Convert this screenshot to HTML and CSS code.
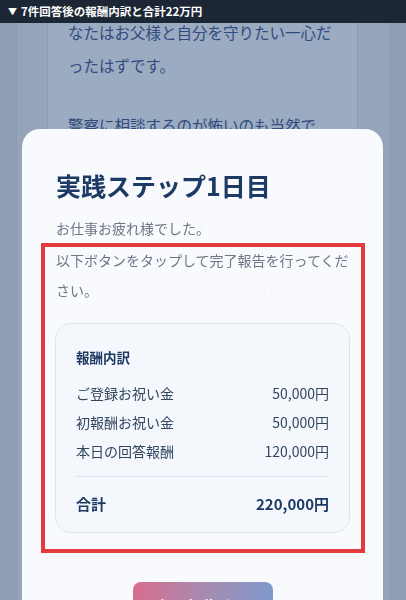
FILE: index.html
```html
<!DOCTYPE html>
<html lang="ja">
<head>
<meta charset="utf-8">
<title>実践ステップ1日目</title>
<link rel="stylesheet" href="styles.css">
</head>
<body>
<header class="topbar"><span class="tri">▼</span><span>7件回答後の報酬内訳と合計22万円</span></header>
<div class="page">
  <div class="col">
    <p class="para">なたはお父様と自分を守りたい一心だったはずです。</p>
    <p class="para">警察に相談するのが怖いのも当然です。そして、あなたがお父様との関係を大切に思う気持ちも、決して間違いではありません。まずはご自分を責めるのをやめて、心と体を休める時間をとってください。あなたの気持ちに寄り添い、これからの一歩を一緒に考えていきましょう。大切なのは、あなた自身が安心して過ごせる毎日を取り戻すことです。</p>
  </div>
</div>

<section class="modal">
  <h1 class="title">実践ステップ1日目</h1>
  <p class="greet">お仕事お疲れ様でした。</p>
  <div class="highlight">
    <p class="lead">以下ボタンをタップして完了報告を行ってください。</p>
    <div class="reward">
      <div class="reward-title">報酬内訳</div>
      <ul class="rows">
        <li class="row"><span>ご登録お祝い金</span><span>50,000円</span></li>
        <li class="row"><span>初報酬お祝い金</span><span>50,000円</span></li>
        <li class="row"><span>本日の回答報酬</span><span>120,000円</span></li>
      </ul>
      <div class="divider"></div>
      <div class="row total"><span>合計</span><span>220,000円</span></div>
    </div>
  </div>
  <button class="cta">完了報告する</button>
</section>
</body>
</html>
```

FILE: styles.css
```css
html, body {
  margin: 0;
  padding: 0;
}
body {
  width: 406px;
  height: 600px;
  overflow: hidden;
  background: #8e9db4;
  font-family: "Noto Sans CJK JP", "Noto Sans", sans-serif;
}
.topbar {
  position: fixed;
  top: 0;
  left: 0;
  right: 0;
  height: 23px;
  background: #1d2634;
  color: #ffffff;
  font-size: 11.5px;
  font-weight: 700;
  line-height: 23px;
  padding-left: 8px;
  display: flex;
  align-items: center;
  gap: 4px;
  z-index: 5;
}
.tri {
  font-size: 9px;
}
.page {
  margin: 0 16px;
  height: 600px;
  background: #95a4ba;
  border-left: 1px solid #8b9ab1;
  border-right: 1px solid #8b9ab1;
  box-sizing: border-box;
}
.col {
  margin: 0 31px 0 30px;
  height: 600px;
  background: #9babc1;
  border-left: 1px solid #8d9cb3;
  border-right: 1px solid #8d9cb3;
  box-sizing: border-box;
  padding: 15.5px 20px 0 20px;
}
.para {
  margin: 0 0 27px;
  font-size: 15.5px;
  line-height: 33px;
  color: #2f4c7e;
}
.modal {
  position: fixed;
  left: 22px;
  right: 23px;
  top: 129px;
  height: 520px;
  background: rgba(251, 252, 254, 0.975);
  border-radius: 18px;
  padding: 38px 34px 0;
  box-sizing: border-box;
  z-index: 2;
}
.title {
  margin: 0;
  font-size: 25px;
  line-height: 36px;
  font-weight: 700;
  color: #1c3a63;
}
.greet {
  margin: 10px 0 0;
  font-size: 14px;
  line-height: 30px;
  color: #6c7686;
}
.highlight {
  margin: 0 -16px 0 -15px;
  border: 4px solid #e23c3c;
  padding: 0 10px 16px 11px;
}
.lead {
  margin: -2px 0 0;
  font-size: 14px;
  line-height: 30px;
  color: #6c7686;
}
.reward {
  margin-top: 18px;
  background: #f4f8fc;
  border: 1px solid #dbe6f1;
  border-radius: 16px;
  padding: 23px 20px 14px 20px;
  margin-left: -1px;
  margin-right: 1px;
}
.reward-title {
  font-size: 13.5px;
  line-height: 20px;
  font-weight: 700;
  color: #1c3a63;
}
.rows {
  list-style: none;
  margin: 12px 0 0;
  padding: 0;
}
.row {
  display: flex;
  justify-content: space-between;
  font-size: 14px;
  line-height: 29px;
  color: #33465f;
}
.divider {
  margin-top: 10px;
  height: 1px;
  background: #dde6ef;
}
.total {
  margin-top: 12px;
  font-size: 15px;
  font-weight: 700;
  color: #1c3a63;
}
.cta {
  display: block;
  margin: 29px auto 0;
  width: 140px;
  height: 48px;
  border: none;
  border-radius: 8px;
  background: linear-gradient(100deg, #d96d8d 0%, #a68bb0 50%, #7b9bd0 100%);
  color: #ffffff;
  font-family: "Noto Sans CJK JP", "Noto Sans", sans-serif;
  font-size: 16px;
  font-weight: 700;
}
```
